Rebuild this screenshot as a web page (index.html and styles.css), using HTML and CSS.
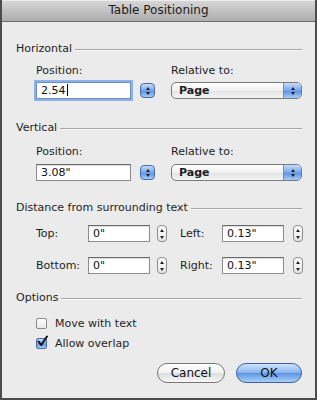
FILE: index.html
```html
<!DOCTYPE html>
<html lang="en">
<head>
  <meta charset="UTF-8">
  <meta name="viewport" content="width=device-width, initial-scale=1.0">
  <title>Table Positioning</title>
  <link rel="stylesheet" href="styles.css">
</head>
<body>
  <div class="window">
    <!-- Title bar -->
    <div class="titlebar">Table Positioning</div>

    <div class="content">
      <!-- Horizontal -->
      <div class="group-title"><span>Horizontal</span></div>
      <div class="pos-row">
        <div class="field">
          <div class="label">Position:</div>
          <div class="field-line">
            <div class="textbox wide focus">2.54<span class="caret"></span></div>
            <span class="stepper blue"><i class="up"></i><i class="down"></i></span>
          </div>
        </div>
        <div class="field">
          <div class="label">Relative to:</div>
          <div class="popup">Page<span class="popup-arrows"><i class="up"></i><i class="down"></i></span></div>
        </div>
      </div>

      <!-- Vertical -->
      <div class="group-title vertical"><span>Vertical</span></div>
      <div class="pos-row vertical">
        <div class="field">
          <div class="label">Position:</div>
          <div class="field-line">
            <div class="textbox wide">3.08"</div>
            <span class="stepper blue"><i class="up"></i><i class="down"></i></span>
          </div>
        </div>
        <div class="field">
          <div class="label">Relative to:</div>
          <div class="popup">Page<span class="popup-arrows"><i class="up"></i><i class="down"></i></span></div>
        </div>
      </div>

      <!-- Distance from surrounding text -->
      <div class="group-title"><span>Distance from surrounding text</span></div>
      <div class="dist-grid">
        <div class="dist-label">Top:</div>
        <div class="textbox small">0"</div>
        <span class="stepper plain"><i class="up"></i><i class="down"></i></span>
        <div class="dist-label second">Left:</div>
        <div class="textbox small">0.13"</div>
        <span class="stepper plain last"><i class="up"></i><i class="down"></i></span>

        <div class="dist-label">Bottom:</div>
        <div class="textbox small">0"</div>
        <span class="stepper plain"><i class="up"></i><i class="down"></i></span>
        <div class="dist-label second">Right:</div>
        <div class="textbox small">0.13"</div>
        <span class="stepper plain last"><i class="up"></i><i class="down"></i></span>
      </div>

      <!-- Options -->
      <div class="group-title options-title"><span>Options</span></div>
      <div class="options">
        <div class="check-row"><span class="checkbox"></span>Move with text</div>
        <div class="check-row"><span class="checkbox checked">
          <svg width="13" height="13" viewBox="0 0 13 13"><path d="M2.5 6.5 L5.2 10 L11 1.5" fill="none" stroke="#111" stroke-width="2" stroke-linecap="round" stroke-linejoin="round"/></svg>
        </span>Allow overlap</div>
      </div>

      <!-- Buttons -->
      <div class="buttons">
        <button class="btn">Cancel</button>
        <button class="btn default">OK</button>
      </div>
    </div>
  </div>
</body>
</html>
```

FILE: styles.css
```css
/* General styling */
body {
  margin: 0;
  padding: 0;
  font-family: 'DejaVu Sans', 'Liberation Sans', sans-serif;
  font-size: 11px;
  color: #1e1e1e;
}

.window {
  width: 317px;
  height: 400px;
  box-sizing: border-box;
  background-color: #ebebeb;
  border-left: 2px solid #4c4c4c;
  border-right: 2px solid #4c4c4c;
  border-bottom: 2px solid #4c4c4c;
  overflow: hidden;
}

/* Title bar */
.titlebar {
  height: 21px;
  line-height: 21px;
  text-align: center;
  font-size: 12px;
  color: #1a1a1a;
  background: linear-gradient(#d8d8d8, #adadad);
  border-bottom: 1px solid #6e6e6e;
  box-shadow: inset 0 1px 0 #ececec;
}

.content {
  padding: 0 13px 0 14px;
}

/* Group headings with rule */
.group-title {
  display: flex;
  align-items: center;
  height: 14px;
  margin-top: 19px;
}

.group-title.vertical {
  margin-top: 21px;
}

.group-title.options-title {
  margin-top: 16px;
}

.group-title span {
  margin-right: 3px;
}

.group-title::after {
  content: '';
  flex: 1;
  height: 1px;
  margin-top: 3px;
  background-color: #a6a6a6;
  box-shadow: 0 1px 0 #fafafa;
}

/* Position rows */
.pos-row {
  display: flex;
  padding-left: 20px;
  margin-top: 9px;
}

.pos-row.vertical {
  margin-top: 11px;
}

.pos-row .field:first-child {
  width: 135px;
}

.field .label {
  height: 14px;
  margin-bottom: 4px;
}

.pos-row.vertical .label {
  margin-bottom: 5px;
}

.field-line {
  display: flex;
  align-items: center;
  gap: 9px;
}

/* Text boxes */
.textbox {
  box-sizing: border-box;
  height: 17px;
  line-height: 15px;
  padding-left: 4px;
  background-color: #fff;
  border: 1px solid #8c8c8c;
  border-top-color: #6a6a6a;
  box-shadow: inset 0 1px 1px rgba(0, 0, 0, 0.15);
  font-size: 11px;
  color: #111;
}

.textbox.wide {
  width: 95px;
}

.textbox.small {
  width: 62px;
}

.textbox.focus {
  border-color: #6d8fc7;
  box-shadow: 0 0 0 2px #8eb2e8;
}

.caret {
  display: inline-block;
  width: 1px;
  height: 12px;
  margin-left: 1px;
  vertical-align: -2px;
  background-color: #000;
}

/* Steppers */
.stepper {
  box-sizing: border-box;
  display: inline-flex;
  flex-direction: column;
  align-items: center;
  justify-content: center;
  gap: 2px;
}

.stepper.blue {
  width: 15px;
  height: 15px;
  border-radius: 4px;
  border: 1px solid #4a6aa8;
  background: linear-gradient(#c6dcf8, #76a6ea 50%, #5b8ee0 51%, #a7ccf6);
}

.stepper.plain {
  width: 10px;
  height: 17px;
  border-radius: 4px;
  border: 1px solid #8a8a8a;
  background: linear-gradient(#fdfdfd, #e6e6e6);
  gap: 4px;
}

.stepper i,
.popup-arrows i {
  display: block;
  width: 0;
  height: 0;
  border-left: 2px solid transparent;
  border-right: 2px solid transparent;
}

.stepper i.up,
.popup-arrows i.up {
  border-bottom: 3px solid #222;
}

.stepper i.down,
.popup-arrows i.down {
  border-top: 3px solid #222;
}

/* Popup menu */
.popup {
  box-sizing: border-box;
  position: relative;
  width: 131px;
  height: 17px;
  line-height: 15px;
  padding-left: 7px;
  border: 1px solid #7a7a7a;
  border-radius: 5px;
  background: linear-gradient(#fefefe, #f0f0f0 50%, #e2e2e2 51%, #f4f4f4);
  font-weight: bold;
  overflow: hidden;
}

.popup-arrows {
  position: absolute;
  top: 0;
  right: 0;
  bottom: 0;
  width: 17px;
  display: flex;
  flex-direction: column;
  align-items: center;
  justify-content: center;
  gap: 2px;
  background: linear-gradient(#c6dcf8, #76a6ea 50%, #5b8ee0 51%, #a7ccf6);
  border-left: 1px solid #6a8cc8;
}

/* Distance grid */
.dist-grid {
  display: grid;
  grid-template-columns: 52px 62px 18px 54px 62px 18px;
  row-gap: 15px;
  align-items: center;
  padding-left: 20px;
  margin-top: 11px;
}

.dist-grid .stepper {
  margin-left: 7px;
}

.dist-grid .stepper.last {
  margin-left: 9px;
}

.dist-label.second {
  padding-left: 12px;
}

/* Options */
.options {
  padding-left: 20px;
  margin-top: 12px;
}

.check-row {
  display: flex;
  align-items: center;
  height: 14px;
  margin-bottom: 6px;
}

.checkbox {
  box-sizing: border-box;
  position: relative;
  width: 11px;
  height: 11px;
  margin-right: 8px;
  border: 1px solid #8a8a8a;
  border-radius: 2px;
  background: linear-gradient(#fdfdfd, #e8e8e8);
}

.checkbox.checked {
  border-color: #4a6aa8;
  background: linear-gradient(#c6dcf8, #76a6ea 50%, #5b8ee0 51%, #a7ccf6);
}

.checkbox svg {
  position: absolute;
  left: -1px;
  top: -4px;
}

/* Buttons */
.buttons {
  display: flex;
  justify-content: flex-end;
  gap: 11px;
  margin-top: 13px;
}

.btn {
  box-sizing: border-box;
  width: 68px;
  height: 20px;
  border-radius: 10px;
  border: 1px solid #777;
  background: linear-gradient(#ffffff, #f2f2f2 50%, #dddddd 51%, #f7f7f7);
  font-family: 'DejaVu Sans', 'Liberation Sans', sans-serif;
  font-size: 12px;
  color: #111;
  padding: 0;
}

.btn.default {
  width: 66px;
  border-color: #3f5f9e;
  background: linear-gradient(#cfe2fb, #86b3ef 50%, #5e93e3 51%, #a9d0f8);
}
```
